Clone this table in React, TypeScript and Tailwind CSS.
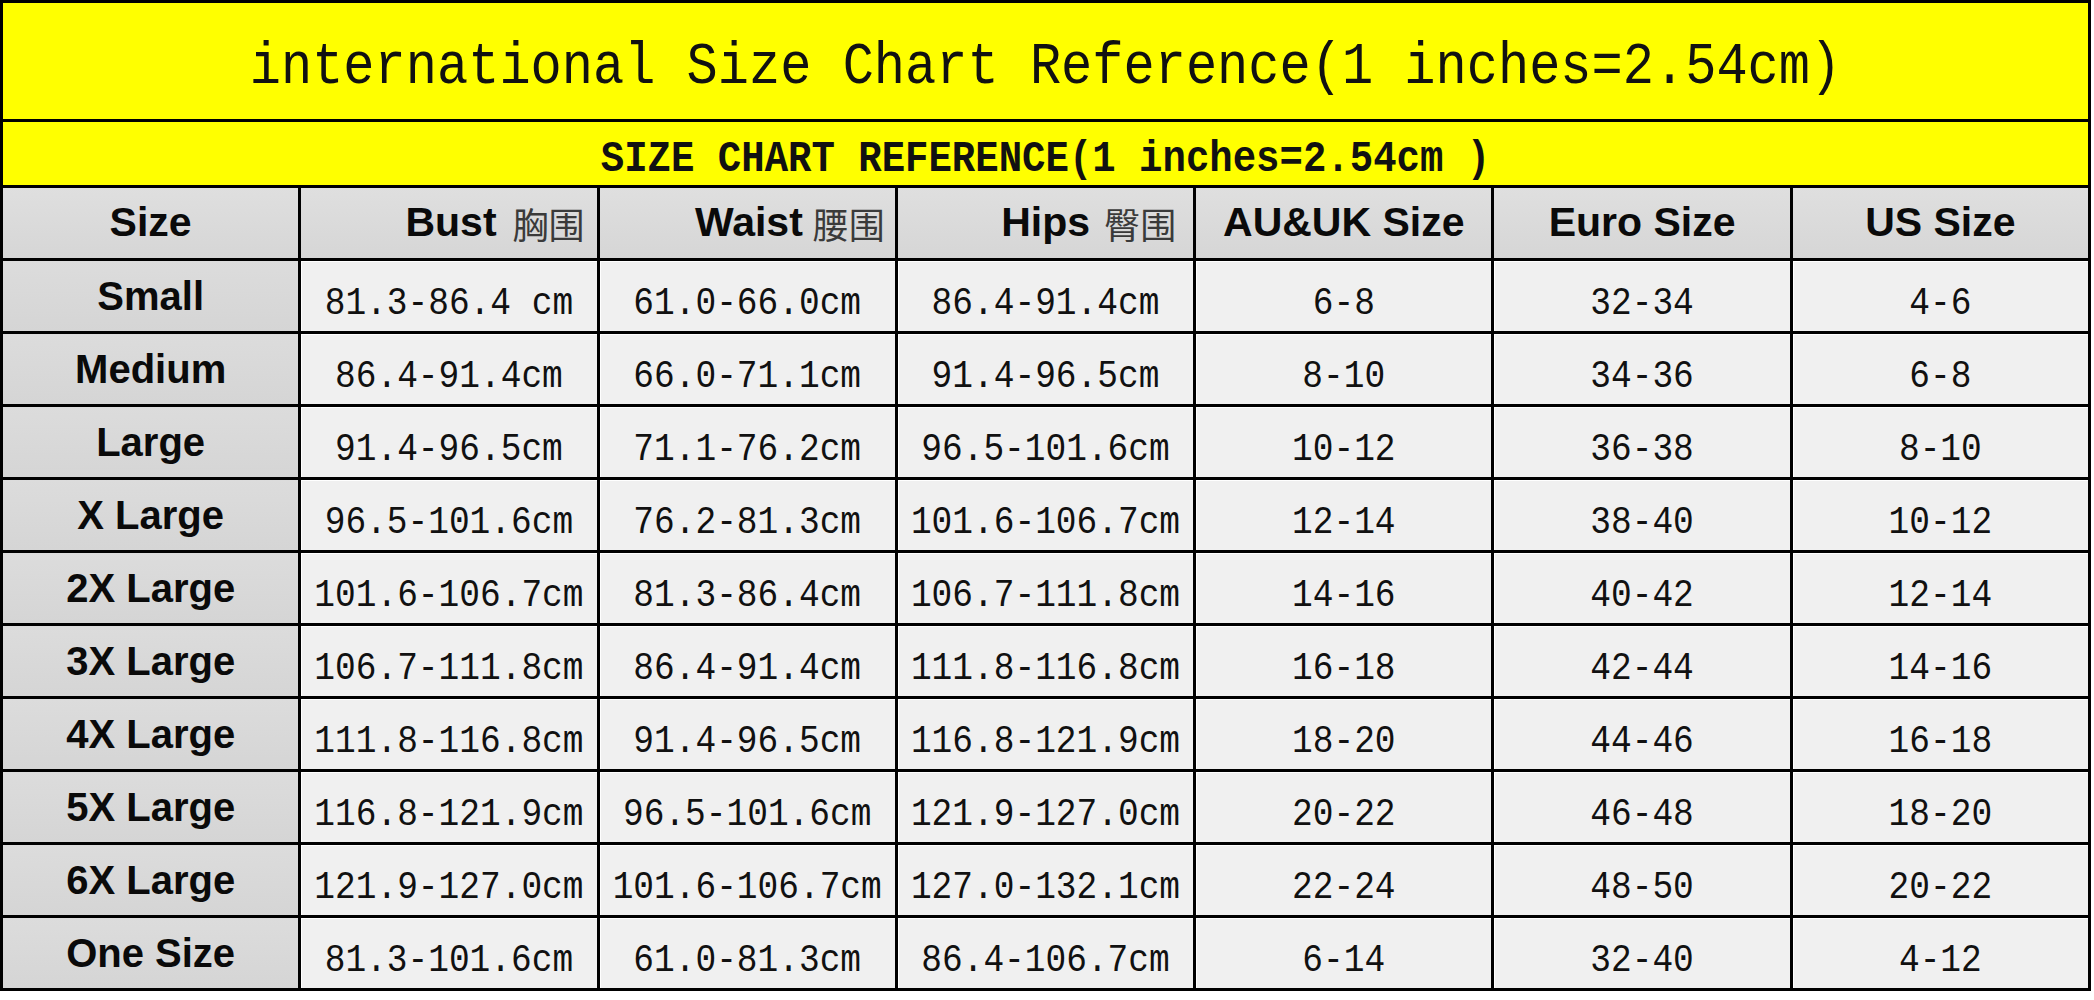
import React from "react";

const rows: string[][] = [
  ["Small", "81.3-86.4 cm", "61.0-66.0cm", "86.4-91.4cm", "6-8", "32-34", "4-6"],
  ["Medium", "86.4-91.4cm", "66.0-71.1cm", "91.4-96.5cm", "8-10", "34-36", "6-8"],
  ["Large", "91.4-96.5cm", "71.1-76.2cm", "96.5-101.6cm", "10-12", "36-38", "8-10"],
  ["X Large", "96.5-101.6cm", "76.2-81.3cm", "101.6-106.7cm", "12-14", "38-40", "10-12"],
  ["2X Large", "101.6-106.7cm", "81.3-86.4cm", "106.7-111.8cm", "14-16", "40-42", "12-14"],
  ["3X Large", "106.7-111.8cm", "86.4-91.4cm", "111.8-116.8cm", "16-18", "42-44", "14-16"],
  ["4X Large", "111.8-116.8cm", "91.4-96.5cm", "116.8-121.9cm", "18-20", "44-46", "16-18"],
  ["5X Large", "116.8-121.9cm", "96.5-101.6cm", "121.9-127.0cm", "20-22", "46-48", "18-20"],
  ["6X Large", "121.9-127.0cm", "101.6-106.7cm", "127.0-132.1cm", "22-24", "48-50", "20-22"],
  ["One Size", "81.3-101.6cm", "61.0-81.3cm", "86.4-106.7cm", "6-14", "32-40", "4-12"],
];

const headCell =
  "flex items-center bg-linear-to-b from-[#dfdfdf] to-[#d6d6d6] font-['Liberation_Sans',Arial,sans-serif] font-bold text-[41px] text-[#0a0a0a] whitespace-nowrap";
const cjk =
  "font-['Noto_Sans_CJK_SC','Noto_Sans_CJK_JP',sans-serif] font-normal text-[36px] text-[#3a3a3a]";

export default function App() {
  return (
    <div className="w-[2094px] h-[1000px] bg-white">
      <div className="w-[2091px] bg-black p-[3px] grid grid-cols-7 gap-[3px] grid-rows-[116px_63px_70px_repeat(10,70px)]">
        <div className="col-span-7 bg-[#ffff00] flex items-center justify-center pt-[14px]">
          <span className="inline-block scale-y-115 font-['Liberation_Mono','Courier_New',monospace] text-[52px] text-[#111] whitespace-nowrap">
            international Size Chart Reference(1 inches=2.54cm)
          </span>
        </div>
        <div className="col-span-7 bg-[#ffff00] flex items-center justify-center pt-[13px]">
          <span className="inline-block scale-y-115 font-['Liberation_Mono','Courier_New',monospace] font-bold text-[39px] text-[#111] whitespace-nowrap">
            SIZE CHART REFERENCE(1 inches=2.54cm )
          </span>
        </div>

        <div className={headCell + " justify-center"}>Size</div>
        <div className={headCell + " justify-end pr-[12px]"}>
          <span>Bust</span>
          <span className={cjk + " ml-[16px]"}>胸围</span>
        </div>
        <div className={headCell + " justify-end pr-[10px]"}>
          <span>Waist</span>
          <span className={cjk + " ml-[10px]"}>腰围</span>
        </div>
        <div className={headCell + " justify-end pr-[17px]"}>
          <span>Hips</span>
          <span className={cjk + " ml-[14px]"}>臀围</span>
        </div>
        <div className={headCell + " justify-center"}>AU&amp;UK Size</div>
        <div className={headCell + " justify-center"}>Euro Size</div>
        <div className={headCell + " justify-center"}>US Size</div>

        {rows.map((r) => (
          <React.Fragment key={r[0]}>
            <div className="flex items-center justify-center bg-linear-to-b from-[#dcdcdc] to-[#d5d5d5] font-['Liberation_Sans',Arial,sans-serif] font-bold text-[40px] text-[#0a0a0a] whitespace-nowrap">
              {r[0]}
            </div>
            {r.slice(1).map((v, i) => (
              <div
                key={i}
                className="flex items-center justify-center bg-[#f0f0f0] shadow-[inset_1px_1px_0_#ffffff] pt-[15px]"
              >
                <span className="inline-block scale-y-115 font-['Liberation_Mono','Courier_New',monospace] text-[34.5px] text-[#111] whitespace-nowrap">
                  {v}
                </span>
              </div>
            ))}
          </React.Fragment>
        ))}
      </div>
    </div>
  );
}
